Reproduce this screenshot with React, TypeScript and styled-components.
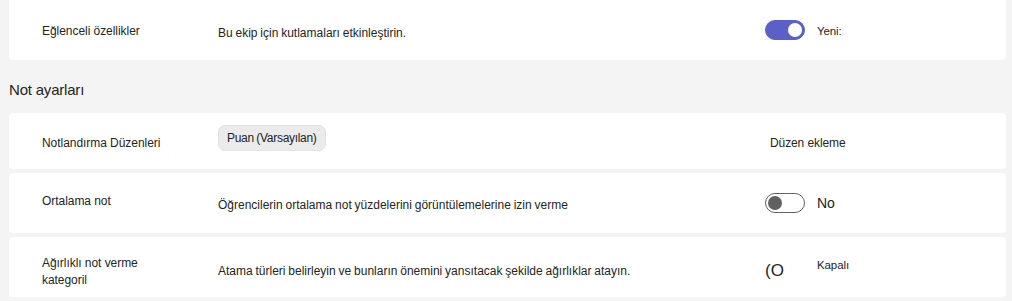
import React, { FC, ReactNode } from 'react';
import styled, { createGlobalStyle } from 'styled-components';

const GlobalStyle = createGlobalStyle`
    html, body {
        margin: 0;
        padding: 0;
        background: #f4f4f4;
    }
    body {
        font-family: 'Liberation Sans', Arial, sans-serif;
        color: #242424;
    }
`;

type RowPropsType = {
    label: ReactNode;
    height: number;
    first?: boolean;
    children?: ReactNode;
    control?: ReactNode;
};

const Row: FC<RowPropsType> = (props) => {
    return (
        <Card $height={props.height} $first={props.first}>
            <Label>{props.label}</Label>
            <Description>{props.children}</Description>
            <Control>{props.control}</Control>
        </Card>
    );
};

export default function App() {
    return (
        <>
            <GlobalStyle />
            <Page>
                <Row
                    first
                    height={64}
                    label="Eğlenceli özellikler"
                    control={
                        <>
                            <Shift $y={-1}>
                                <Switch $on />
                            </Shift>
                            <SwitchText $small>Yeni:</SwitchText>
                        </>
                    }
                >
                    <Shift $y={2}>Bu ekip için kutlamaları etkinleştirin.</Shift>
                </Row>
                <SectionTitle>Not ayarları</SectionTitle>
                <List>
                    <Row
                        height={56}
                        label={<Shift $y={2}>Notlandırma Düzenleri</Shift>}
                        control={<Shift $y={2} $x={5}>Düzen ekleme</Shift>}
                    >
                        <Chip>Puan (Varsayılan)</Chip>
                    </Row>
                    <Row
                        height={60}
                        label={<Shift $y={-2}>Ortalama not</Shift>}
                        control={
                            <>
                                <Switch />
                                <SwitchText>No</SwitchText>
                            </>
                        }
                    >
                        <Shift $y={2}>Öğrencilerin ortalama not yüzdelerini görüntülemelerine izin verme</Shift>
                    </Row>
                    <Row
                        height={60}
                        label={
                            <TwoLines>
                                Ağırlıklı not verme
                                <br />
                                kategoril
                            </TwoLines>
                        }
                        control={
                            <>
                                <Glyph>(O</Glyph>
                                <SwitchText $small $y={-2}>Kapalı</SwitchText>
                            </>
                        }
                    >
                        <Shift $y={4}>Atama türleri belirleyin ve bunların önemini yansıtacak şekilde ağırlıklar atayın.</Shift>
                    </Row>
                </List>
            </Page>
        </>
    );
}

const Page = styled.div`
    width: 1012px;
    height: 301px;
    overflow: hidden;
    padding: 0 6px 0 9px;
    box-sizing: border-box;
`;

const List = styled.div`
    display: flex;
    flex-direction: column;
    gap: 4px;
`;

const Card = styled.div<{ $height: number; $first?: boolean }>`
    display: grid;
    grid-template-columns: 176px 547px 1fr;
    align-items: center;
    height: ${(p) => p.$height}px;
    margin-top: ${(p) => (p.$first ? '-4px' : '0')};
    padding-left: 33px;
    padding-top: ${(p) => (p.$first ? '6px' : '0')};
    background: #ffffff;
    border-radius: 4px;
    box-sizing: border-box;
`;

const Label = styled.div`
    font-size: 12px;
    letter-spacing: -0.05px;
    line-height: 17px;
`;

const Description = styled.div`
    font-size: 12px;
    letter-spacing: 0;
    word-spacing: -0.5px;
    line-height: 16px;
`;

const Control = styled.div`
    display: flex;
    align-items: center;
    gap: 12px;
    font-size: 12px;
    letter-spacing: -0.1px;
`;

const Shift = styled.span<{ $y?: number; $x?: number }>`
    display: inline-block;
    position: relative;
    top: ${(p) => p.$y ?? 0}px;
    left: ${(p) => p.$x ?? 0}px;
    line-height: 0;
    & > * {
        vertical-align: middle;
    }
    &:not(:has(*)) {
        line-height: inherit;
    }
`;

const TwoLines = styled.div`
    position: relative;
    top: 5px;
`;

const SectionTitle = styled.h2`
    margin: 0;
    height: 53px;
    padding-top: 6px;
    box-sizing: border-box;
    display: flex;
    align-items: center;
    font-size: 15px;
    font-weight: 400;
    letter-spacing: -0.2px;
    color: #242424;
`;

const Chip = styled.span`
    display: inline-flex;
    align-items: center;
    height: 26px;
    padding: 0 8px;
    box-sizing: border-box;
    background: #ebebeb;
    border: 1px solid #e3e3e3;
    border-radius: 7px;
    font-size: 12px;
    letter-spacing: -0.3px;
    position: relative;
    top: -3px;
`;

const Switch = styled.span<{ $on?: boolean }>`
    position: relative;
    display: inline-block;
    width: 40px;
    height: 20px;
    box-sizing: border-box;
    border-radius: 10px;
    background: ${(p) => (p.$on ? '#5b5fc7' : '#ffffff')};
    border: 1px solid ${(p) => (p.$on ? '#5b5fc7' : '#616161')};
    &::after {
        content: '';
        position: absolute;
        top: 2px;
        left: ${(p) => (p.$on ? '22px' : '2px')};
        width: 14px;
        height: 14px;
        border-radius: 50%;
        background: ${(p) => (p.$on ? '#ffffff' : '#616161')};
    }
`;

const SwitchText = styled.span<{ $small?: boolean; $y?: number }>`
    font-size: ${(p) => (p.$small ? '11.5px' : '14px')};
    position: relative;
    top: ${(p) => p.$y ?? 0}px;
`;

const Glyph = styled.span`
    display: inline-block;
    width: 40px;
    font-size: 17px;
    font-weight: 400;
    letter-spacing: 0;
    position: relative;
    top: 4px;
`;
